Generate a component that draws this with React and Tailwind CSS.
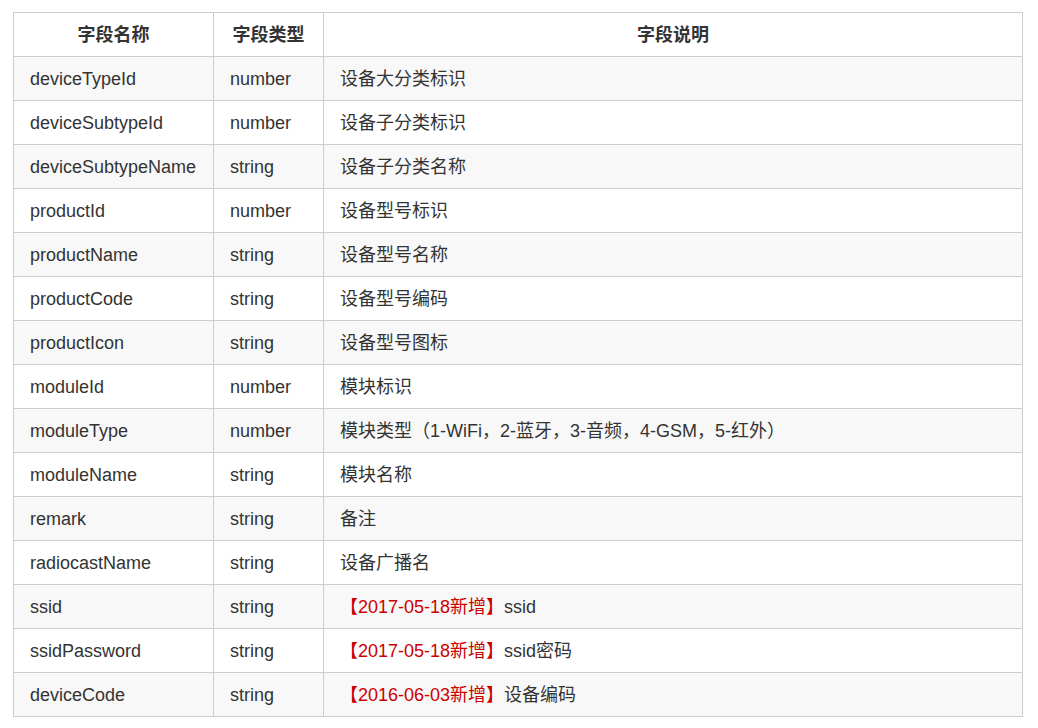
const rows = [
  ["deviceTypeId", "number", "设备大分类标识"],
  ["deviceSubtypeId", "number", "设备子分类标识"],
  ["deviceSubtypeName", "string", "设备子分类名称"],
  ["productId", "number", "设备型号标识"],
  ["productName", "string", "设备型号名称"],
  ["productCode", "string", "设备型号编码"],
  ["productIcon", "string", "设备型号图标"],
  ["moduleId", "number", "模块标识"],
  ["moduleType", "number", "模块类型（1-WiFi，2-蓝牙，3-音频，4-GSM，5-红外）"],
  ["moduleName", "string", "模块名称"],
  ["remark", "string", "备注"],
  ["radiocastName", "string", "设备广播名"],
  ["ssid", "string", "ssid", "【2017-05-18新增】"],
  ["ssidPassword", "string", "ssid密码", "【2017-05-18新增】"],
  ["deviceCode", "string", "设备编码", "【2016-06-03新增】"],
];

export default function App() {
  return (
    <div
      className="w-[1038px] h-[728px] bg-white pt-[12px] pl-[13px] text-[#333] text-[18px] leading-[24px]"
      style={{ fontFamily: '"Liberation Sans", Arial, "Noto Sans CJK SC", sans-serif' }}
    >
      <table className="border-collapse table-fixed w-[1010px]">
        <colgroup>
          <col className="w-[200px]" />
          <col className="w-[110px]" />
          <col />
        </colgroup>
        <thead>
          <tr className="h-[44px]">
            <th className="border border-[#cccccc] font-bold text-center align-middle p-0">字段名称</th>
            <th className="border border-[#cccccc] font-bold text-center align-middle p-0">字段类型</th>
            <th className="border border-[#cccccc] font-bold text-center align-middle p-0">字段说明</th>
          </tr>
        </thead>
        <tbody>
          {rows.map((r, i) => (
            <tr key={r[0]} className={i % 2 === 0 ? "h-[44px] bg-[#f8f8f8]" : "h-[44px] bg-white"}>
              <td className="border border-[#cccccc] pl-4 pr-1 py-0 align-middle whitespace-nowrap">{r[0]}</td>
              <td className="border border-[#cccccc] pl-4 pr-1 py-0 align-middle">{r[1]}</td>
              <td className="border border-[#cccccc] pl-4 pr-1 py-0 align-middle whitespace-nowrap">
                {r[3] && <span className="text-[#cc0000]">{r[3]}</span>}
                {r[2]}
              </td>
            </tr>
          ))}
        </tbody>
      </table>
    </div>
  );
}
